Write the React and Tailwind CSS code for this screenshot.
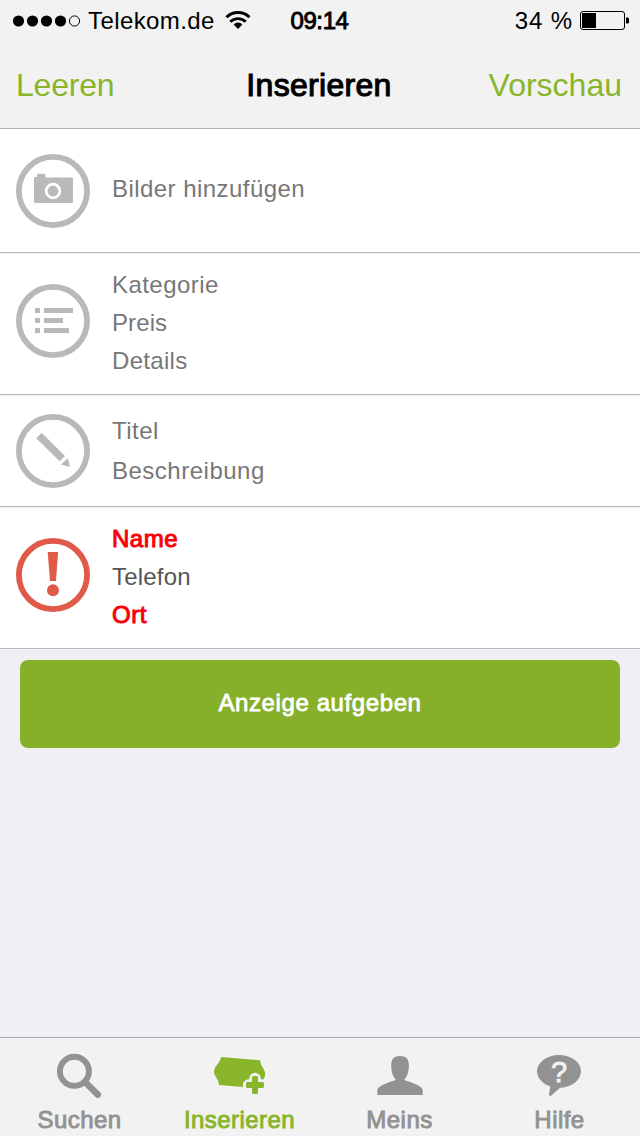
import React, { useState } from "react";

const RingIcon = ({ color = "#b9b9b9", children }) => (
  <svg viewBox="0 0 74 74" className="h-[74px] w-[74px] shrink-0" fill={color}>
    <circle cx="37" cy="37" r="34.100" fill="none" stroke={color} strokeWidth="5.800" />
    {children}
  </svg>
);

const CameraIcon = () => (
  <RingIcon>
    <path d="M19 23h2v-2a1.200 1.200 0 0 1 1.200-1.200h6a1.200 1.200 0 0 1 1.200 1.200v2.400H56a1 1 0 0 1 1 1V48a1 1 0 0 1-1 1H19a1 1 0 0 1-1-1V24a1 1 0 0 1 1-1z" />
    <circle cx="37" cy="37" r="6.800" fill="#b9b9b9" stroke="#fff" strokeWidth="2.800" />
  </RingIcon>
);

const ListIcon = () => (
  <RingIcon>
    <path d="M19 24h5v5h-5zM28 24h29v5H28zM19 34h5v5h-5zM28 34h19v5H28zM19 44h5v5h-5zM28 44h25v5H28z" />
  </RingIcon>
);

const PencilIcon = () => (
  <RingIcon>
    <path d="M25.700 18.700 49 42l-5.300 5.300L20.200 24.300zM51.800 44.200 54 53l-9-2.600z" />
  </RingIcon>
);

const AlertIcon = () => (
  <RingIcon color="#df5a49">
    <path d="M31.700 14h10.400L40 43h-6z" />
    <circle cx="37" cy="52.300" r="6" />
  </RingIcon>
);

const SearchIcon = () => (
  <svg viewBox="0 0 64 50" className="h-[50px] w-16" fill="none" stroke="currentColor">
    <circle cx="26.400" cy="23.300" r="14.500" strokeWidth="5.900" />
    <path d="M37 34l12.800 12.600" strokeWidth="6.600" strokeLinecap="round" />
  </svg>
);

const TagIcon = () => (
  <svg viewBox="0 0 64 50" className="h-[50px] w-16" fill="currentColor">
    <path d="M13.300 9 52 12.300q.3 4 3 7.700c2.500 4 2.800 6.500 1.200 10-2 3-3 5-3.200 9H35.300L11 37q0-4-2.800-7.500c-2.700-4-2.900-7-.4-11Q12 14 13.300 9z" />
    <path d="M47 30.500v13M40.500 37h13" stroke="#f2f2f2" strokeWidth="11.500" strokeLinecap="round" strokeLinejoin="round" />
    <path d="M47 30.800v12.400M40.800 37h12.400" stroke="currentColor" strokeWidth="5.800" strokeLinecap="round" />
    <path d="M44.100 28.500h5.800v17h-5.800zM38.500 34.100h17v5.800h-17z" />
  </svg>
);

const PersonIcon = () => (
  <svg viewBox="0 0 64 50" className="h-[50px] w-16" fill="currentColor">
    <path d="M32 8c6 0 8.900 3.200 8.900 9 0 6-1.400 11.500-4.700 14.600.8 1 2.800 1.500 5.300 2.200 7 2.400 13.200 5.200 13.200 9V47H9.300v-4.200c0-3.800 6-6.600 13.100-9 2.600-.7 4.600-1.200 5.400-2.200C24.500 28.500 23.200 23 23.200 17c0-5.800 2.800-9 8.800-9z" />
  </svg>
);

const HelpIcon = () => (
  <svg viewBox="0 0 64 50" className="h-[50px] w-16" fill="currentColor">
    <ellipse cx="31" cy="23.300" rx="22" ry="16.400" />
    <path d="M22.500 36.500 21 46.800q.4 1.800 2.400.8L34 38z" />
    <text x="31" y="34" textAnchor="middle" fill="#f2f2f2" stroke="#f2f2f2" strokeWidth="0.900" className="font-['Liberation_Sans',sans-serif] text-[29px]">?</text>
  </svg>
);

const tabs = [
  { label: "Suchen", icon: SearchIcon },
  { label: "Inserieren", icon: TagIcon },
  { label: "Meins", icon: PersonIcon },
  { label: "Hilfe", icon: HelpIcon },
];

function StatusBar() {
  return (
    <div className="grid h-[41px] grid-cols-[1fr_auto_1fr] items-center pr-[11px] pl-3 text-2xl leading-[41px] text-black">
      <div className="flex items-center">
        <svg viewBox="0 0 70 14" className="mr-1.5 h-3.5 w-[70px]">
          <circle cx="6.500" cy="7" r="5.600" />
          <circle cx="20.500" cy="7" r="5.600" />
          <circle cx="34.500" cy="7" r="5.600" />
          <circle cx="48.500" cy="7" r="5.600" />
          <circle cx="62.500" cy="7" r="5.100" fill="none" stroke="#000" />
        </svg>
        <span className="tracking-[0.4px]">Telekom.de</span>
        <svg viewBox="0 0 26 18" className="mb-0.5 ml-2.5 h-[18px] w-[26px]" fill="none" stroke="#000" strokeWidth="2.900">
          <path d="M1.500 6.200a16.500 16.500 0 0 1 23 0" />
          <path d="M5.300 10.800a11 11 0 0 1 15.400 0" />
          <path d="M13 18 8.600 13.400a6.200 6.200 0 0 1 8.800 0z" fill="#000" stroke="none" />
        </svg>
      </div>
      <span className="mr-0.5 tracking-[-0.4px] [-webkit-text-stroke:0.9px]">09:14</span>
      <div className="flex items-center justify-end">
        <span className="mr-[7px] tracking-[0.9px]">34 %</span>
        <svg viewBox="0 0 49 20" className="h-5 w-[49px]">
          <rect x="0.500" y="0.500" width="44" height="18" rx="2.500" fill="none" stroke="#000" />
          <rect x="2" y="2" width="14" height="15" />
          <path d="M46 6.500h1.500q1.500 0 1.500 1.500v3q0 1.500-1.500 1.500H46z" />
        </svg>
      </div>
    </div>
  );
}

export default function App() {
  const [activeTab, setActiveTab] = useState("Inserieren");

  return (
    <div className="flex h-[1136px] w-[640px] flex-col bg-[#efeff4] font-['Liberation_Sans',Arial,sans-serif] text-2xl text-[#777777]">
      {/* Header */}
      <header className="h-[129px] border-b border-[#b2b2b2] bg-[#f2f2f2]">
        <StatusBar />
        <nav className="grid h-[87px] grid-cols-[1fr_auto_1fr] items-center pt-px pr-[18px] pl-4 text-[32px] text-[#89b52b]">
          <button className="text-left tracking-[-0.2px]">Leeren</button>
          <h1 className="tracking-[0.3px] text-black [-webkit-text-stroke:1.1px]">Inserieren</h1>
          <button className="text-right">Vorschau</button>
        </nav>
      </header>

      {/* Ad form */}
      <main className="flex-1">
        <section className="flex h-[124px] gap-[22px] border-b border-[#b9b9b9] bg-white px-4 pt-[25px]">
          <CameraIcon />
          <p className="pt-4 leading-[38px] tracking-[0.45px]">Bilder hinzufügen</p>
        </section>

        <section className="flex h-[142px] gap-[22px] border-t border-b border-t-[#efefef] border-b-[#b9b9b9] bg-white px-4 pt-3">
          <div className="pt-[18px]">
            <ListIcon />
          </div>
          <div className="leading-[38px] tracking-[0.45px]">
            <p>Kategorie</p>
            <p className="tracking-[0.1px]">Preis</p>
            <p className="tracking-[0.3px]">Details</p>
          </div>
        </section>

        <section className="flex h-28 gap-[22px] border-t border-b border-t-[#efefef] border-b-[#b9b9b9] bg-white px-4 pt-[15px]">
          <div className="pt-[3px]">
            <PencilIcon />
          </div>
          <div className="leading-10 tracking-[0.5px]">
            <p>Titel</p>
            <p>Beschreibung</p>
          </div>
        </section>

        <section className="flex h-[142px] gap-[22px] border-t border-b border-t-[#efefef] border-b-[#b9b9b9] bg-white px-4 pt-3">
          <div className="pt-[18px]">
            <AlertIcon />
          </div>
          <div className="leading-[38px] tracking-[0.5px]">
            <p className="text-[#fb0007] [-webkit-text-stroke:1px]">Name</p>
            <p className="tracking-[0.2px] text-[#555555]">Telefon</p>
            <p className="text-[#fb0007] [-webkit-text-stroke:1px]">Ort</p>
          </div>
        </section>

        <div className="px-5 pt-[11px]">
          <button className="h-[88px] w-full rounded-lg bg-[#87b02a] pb-0.5 tracking-[0.6px] text-white [-webkit-text-stroke:0.8px]">
            Anzeige aufgeben
          </button>
        </div>
      </main>

      {/* Tab bar */}
      <footer className="flex h-[99px] border-t border-[#a7a7ab] bg-[#f2f2f2]">
        {tabs.map(({ label, icon: Icon }) => (
          <button
            key={label}
            onClick={() => setActiveTab(label)}
            className={`flex flex-1 basis-0 flex-col items-center pt-2.5 ${
              activeTab === label ? "text-[#89b52b]" : "text-[#929292]"
            }`}
          >
            <Icon />
            <span className="mt-1.5 mr-px leading-8 tracking-[0.45px] [-webkit-text-stroke:0.9px]">{label}</span>
          </button>
        ))}
      </footer>
    </div>
  );
}
